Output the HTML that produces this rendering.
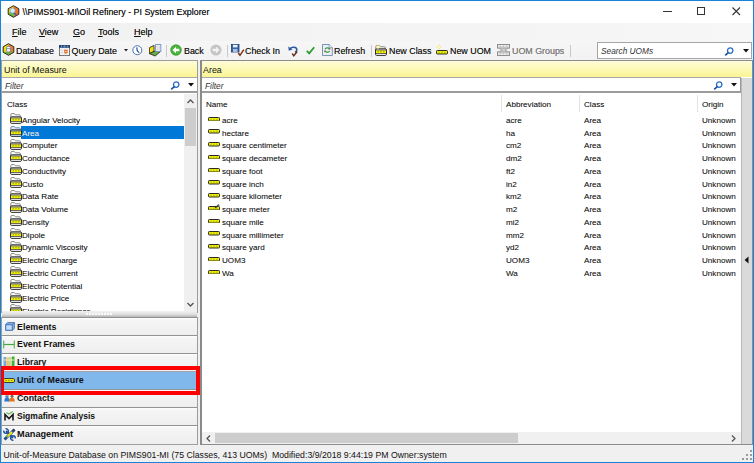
<!DOCTYPE html><html><head><meta charset="utf-8"><style>
*{margin:0;padding:0;box-sizing:border-box}
html,body{width:754px;height:463px;overflow:hidden;background:#fff}
body{font-family:"Liberation Sans",sans-serif;color:#000;position:relative}
div,svg{position:absolute}
.t{white-space:nowrap;line-height:1}
.mi{font-size:9px;color:#111;text-shadow:0 0 0.3px rgba(0,0,0,.6)}
.tb{font-size:8.9px;color:#1a1a1a;text-shadow:0 0 0.3px rgba(0,0,0,.6)}
.it{font-size:8.1px;color:#1e1e1e;text-shadow:0 0 0.2px rgba(0,0,0,.35)}
.nb{font-size:8.8px;font-weight:bold;color:#111}
.nav{left:2px;width:195px;height:18px;background:linear-gradient(#fdfdfd,#f5f5f5 15%,#eeeeee);border-top:1px solid #939393}
</style></head><body>
<div style="left:0;top:0;width:754px;height:463px;background:#f0f0f0"></div>
<div style="left:0;top:0;width:754px;height:23px;background:#fff"></div>
<div style="left:0;top:23px;width:754px;height:18px;background:linear-gradient(90deg,#f1f1f1,#f4f4f4 60%,#f7f7f7)"></div>
<div style="left:0;top:41px;width:754px;height:19px;background:linear-gradient(#f6f6f6,#f2f2f2)"></div>
<svg style="left:6.5px;top:4.5px" width="13" height="13" viewBox="0 0 13 13">
<polygon points="6.5,0.7 11.8,3.7 11.8,9.3 6.5,12.3 1.2,9.3 1.2,3.7" fill="#ee7422"/>
<polygon points="6.5,0.7 1.2,3.7 1.2,9.3 4,10.8 6.5,6.5" fill="#f2dc10"/>
<polygon points="1.2,8 4,10.8 6.5,12.3 7.5,9 4,7" fill="#5cbf40"/>
<polygon points="6.5,0.7 11.8,3.7 11.8,9.3 6.5,12.3 1.2,9.3 1.2,3.7" fill="none" stroke="#2a2a2a" stroke-width="1"/>
<path d="M6.8 7.3L9.3 10.6" stroke="#5a5a9a" stroke-width="1.6"/>
<circle cx="5.6" cy="5.6" r="2.6" fill="#d4ecfa" stroke="#6a8ab0" stroke-width="0.6"/>
</svg>
<div class="t " style="left:22.6px;top:7.6px;font-size:8.9px;color:#111;text-shadow:0 0 0.3px rgba(0,0,0,.6)">\\PIMS901-MI\Oil Refinery - PI System Explorer</div>
<div style="left:663px;top:11px;width:9px;height:1px;background:#333"></div>
<div style="left:697px;top:7px;width:8px;height:8px;border:1px solid #333"></div>
<svg style="left:732px;top:7px" width="9" height="9"><path d="M0.5 0.5L8 8M8 0.5L0.5 8" stroke="#333" stroke-width="1.1"/></svg>
<div class="t mi" style="left:12px;top:28px;"><u>F</u>ile</div>
<div class="t mi" style="left:39px;top:28px;"><u>V</u>iew</div>
<div class="t mi" style="left:73px;top:28px;"><u>G</u>o</div>
<div class="t mi" style="left:98px;top:28px;"><u>T</u>ools</div>
<div class="t mi" style="left:134px;top:28px;"><u>H</u>elp</div>
<div class="t tb" style="left:16px;top:46.5px;">Database</div>
<div class="t tb" style="left:71.5px;top:46.5px;">Query Date</div>
<div class="t tb" style="left:184px;top:46.5px;">Back</div>
<div class="t tb" style="left:245px;top:46.5px;">Check In</div>
<div class="t tb" style="left:334px;top:46.5px;">Refresh</div>
<div class="t tb" style="left:389px;top:46.5px;">New Class</div>
<div class="t tb" style="left:450px;top:46.5px;">New UOM</div>
<div class="t tb" style="left:512px;top:46.5px;color:#8c8c8c">UOM Groups</div>
<div style="left:166px;top:45px;width:1px;height:12px;background:#c8c8c8"></div>
<div style="left:227px;top:45px;width:1px;height:12px;background:#c8c8c8"></div>
<div style="left:371px;top:45px;width:1px;height:12px;background:#c8c8c8"></div>
<div style="left:570px;top:45px;width:1px;height:12px;background:#c8c8c8"></div>
<svg style="left:2px;top:43px" width="13" height="13" viewBox="0 0 13 13">
<polygon points="6.5,0.7 11.8,3.7 11.8,9.3 6.5,12.3 1.2,9.3 1.2,3.7" fill="#ee7a1e"/>
<polygon points="6.5,0.7 1.2,3.7 1.2,9.3 6.5,9.3" fill="#f2dc10"/>
<polygon points="1.2,8.6 6.5,12.3 11.8,8.6 11.8,9.3 6.5,12.3 1.2,9.3" fill="#5cbf40"/>
<polygon points="1.6,8.4 6.5,11.8 11.4,8.4 6.5,9.5" fill="#5cbf40"/>
<polygon points="6.5,0.7 11.8,3.7 11.8,9.3 6.5,12.3 1.2,9.3 1.2,3.7" fill="none" stroke="#2a2a2a" stroke-width="1"/>
<rect x="4.6" y="3.4" width="3.8" height="5.6" rx="1.2" fill="#f8f8f8" stroke="#5a78a8" stroke-width="0.8"/>
<path d="M4.8 5.6H8.2" stroke="#5a78a8" stroke-width="0.7"/>
</svg>
<svg style="left:59px;top:45px" width="11" height="11" viewBox="0 0 11 11">
<rect x="0.5" y="0.5" width="10" height="10" fill="#fafafa" stroke="#707070" stroke-width="1"/>
<rect x="0" y="0" width="11" height="2.8" fill="#23457e"/>
<path d="M2 1.2H3M4.5 1.2H6.5M8 1.2H9" stroke="#c8d4e8" stroke-width="0.8"/>
<path d="M0.5 5.2H10.5M0.5 7.8H10.5M3 2.8V10.5M5.5 2.8V10.5M8 2.8V10.5" stroke="#d0d0d0" stroke-width="0.6"/>
<path d="M5.3 4.8H8.5V7.3L6.9 9L5.3 7.3Z" fill="#ee6a1a"/>
<circle cx="6.9" cy="6.6" r="0.7" fill="#fff"/>
</svg>
<svg style="left:123.5px;top:49px" width="4" height="3"><path d="M0 0H4L2 2.5Z" fill="#222"/></svg>
<svg style="left:132px;top:45px" width="11" height="11" viewBox="0 0 11 11">
<circle cx="5.3" cy="5.2" r="4.5" fill="#fff" stroke="#4a74b4" stroke-width="1"/>
<path d="M5 2.3C4.6 4.5 5.2 6.3 7.2 7.6" stroke="#1f3f73" stroke-width="1.1" fill="none"/>
</svg>
<svg style="left:149px;top:44px" width="13" height="13" viewBox="0 0 13 13">
<polygon points="0.4,3.7 5,1.4 5,7.4 0.4,9.6" fill="#f0e010" stroke="#3a2a20" stroke-width="0.9"/>
<polygon points="0.4,9.6 5,7.4 11.6,7.4 6.1,12" fill="#5fb048" stroke="#3a2a20" stroke-width="0.9"/>
<rect x="6.6" y="0.5" width="5.2" height="7" fill="#f4f4f4" stroke="#6a90c8" stroke-width="0.9"/>
<path d="M8.2 1.5V6.5M10.2 1.5V6.5" stroke="#c8c8c8" stroke-width="0.8"/>
</svg>
<svg style="left:169.5px;top:44px" width="12" height="12" viewBox="0 0 12 12">
<circle cx="6" cy="6" r="5.6" fill="#4cb43c"/>
<circle cx="6" cy="6" r="5.2" fill="none" stroke="#3a9a30" stroke-width="0.6"/>
<path d="M2.5 6L6 2.7V4.7H9.3V7.3H6V9.3Z" fill="#fff"/>
</svg>
<svg style="left:209.5px;top:44px" width="12" height="12" viewBox="0 0 12 12">
<circle cx="6" cy="6" r="5.6" fill="#c6c6c6"/>
<path d="M9.5 6L6 2.7V4.7H2.7V7.3H6V9.3Z" fill="#f4f4f4"/>
</svg>
<svg style="left:230.5px;top:44px" width="14" height="13" viewBox="0 0 14 13">
<rect x="0.5" y="0.5" width="7.5" height="7.5" fill="#3a66aa" stroke="#203c70" stroke-width="0.8"/>
<rect x="2" y="0.8" width="4.5" height="2.6" fill="#e8eef6"/>
<rect x="2" y="5" width="4.5" height="3" fill="#a8bedc"/>
<path d="M7.3 9L9 11.3L12.8 5.6" stroke="#7a2f1b" stroke-width="1.5" fill="none"/>
</svg>
<svg style="left:288px;top:45px" width="11" height="12" viewBox="0 0 11 12">
<path d="M2 3.8C3.5 1.8 8.8 1.5 8.8 4.8C8.8 6 8 6.8 7 7.2" stroke="#2a5aa6" stroke-width="1.6" fill="none"/>
<path d="M0.2 1.6L0.8 5.8L4.6 4.6Z" fill="#2a5aa6"/>
<path d="M4.2 8.5L5.8 10.8L9.2 6.5" stroke="#6a2f1b" stroke-width="1.4" fill="none"/>
</svg>
<svg style="left:305.5px;top:46px" width="9" height="9" viewBox="0 0 9 9"><path d="M0.8 4.8L3.2 7.4L8.2 1.2" stroke="#2a9a2a" stroke-width="1.7" fill="none"/></svg>
<svg style="left:321.5px;top:44px" width="11" height="12" viewBox="0 0 11 12">
<path d="M0.5 0.5H7.2L10.3 3.6V11.5H0.5Z" fill="#e8f0fa" stroke="#7088a8" stroke-width="0.9"/>
<path d="M7.2 0.5V3.6H10.3" fill="#fff" stroke="#7088a8" stroke-width="0.7"/>
<path d="M3 5.2C3.8 3.6 6.6 3.6 7.4 5" stroke="#3aa035" stroke-width="1.3" fill="none"/>
<path d="M7.6 7C6.8 8.6 4 8.6 3.2 7.2" stroke="#3aa035" stroke-width="1.3" fill="none"/>
<path d="M6.3 5.6H8.3V3.6Z" fill="#8a4a2a"/><path d="M4.3 6.6H2.3V8.6Z" fill="#8a4a2a"/>
</svg>
<svg style="left:375px;top:45px" width="12" height="11" viewBox="0 0 12 11">
<path d="M0.8 5V1.6Q0.8 0.6 1.8 0.6H4.4L5.4 1.8H9.4Q10.3 1.8 10.3 2.7V5" fill="#ffffff" stroke="#6a6a6a" stroke-width="0.8"/>
<rect x="0.5" y="3.8" width="11" height="6.6" rx="1.2" fill="#f6f6f6" stroke="#303030" stroke-width="1"/>
<rect x="1" y="5.3" width="10" height="2.9" fill="#f2f200"/>
<path d="M1 5H11M1 8.5H11" stroke="#2a2a2a" stroke-width="0.7"/>
<path d="M2.6 6.75H3.8M5.4 6.75H6.6M8.2 6.75H9.4" stroke="#7a7a20" stroke-width="0.9"/>
</svg>
<svg style="left:375px;top:43.5px" width="6" height="6"><path d="M3 0L3.8 2.2L6 3L3.8 3.8L3 6L2.2 3.8L0 3L2.2 2.2Z" fill="#f0dc60"/><circle cx="3" cy="3" r="1.3" fill="#fff6c0"/></svg>
<svg style="left:436px;top:50px" width="12" height="4.5" viewBox="0 0 12 4.5">
<rect x="0.5" y="0.5" width="11" height="3.5" rx="0.8" fill="#f0f000" stroke="#2a2a2a" stroke-width="1"/>
<path d="M2.3 2.25H3.6M5.2 2.25H6.6M8.2 2.25H9.6" stroke="#9a9a20" stroke-width="0.8"/>
</svg>
<svg style="left:435.5px;top:44px" width="6" height="6"><path d="M3 0L3.8 2.2L6 3L3.8 3.8L3 6L2.2 3.8L0 3L2.2 2.2Z" fill="#f0dc60"/><circle cx="3" cy="3" r="1.3" fill="#fff6c0"/></svg>
<svg style="left:497px;top:44px" width="13" height="12" viewBox="0 0 13 12">
<rect x="0.5" y="0.5" width="12" height="3.6" fill="#e8e8e8" stroke="#909090"/>
<rect x="0.5" y="7.9" width="12" height="3.6" fill="#e8e8e8" stroke="#909090"/>
<path d="M2.5 2.3H4M5.8 2.3H7.2M9 2.3H10.5M2.5 9.7H4M5.8 9.7H7.2M9 9.7H10.5" stroke="#a8a8a8" stroke-width="0.8"/>
<path d="M2 4.1L5 6L2 7.9M11 4.1L8 6L11 7.9M5 6H8" stroke="#9a9a9a" stroke-width="0.9" fill="none"/>
</svg>
<div style="left:597px;top:42px;width:155px;height:17px;background:#fff;border:1px solid #a5a5a5"></div>
<div class="t " style="left:601px;top:47px;font-size:8.3px;font-style:italic;color:#333">Search UOMs</div>
<svg style="left:724px;top:46.5px" width="10" height="9" viewBox="0 0 10 9">
<circle cx="6.2" cy="3.6" r="2.7" fill="none" stroke="#2b6cc4" stroke-width="1.3"/>
<path d="M4.3 5.6L1.2 8.4" stroke="#1d4e96" stroke-width="1.6"/>
</svg>
<svg style="left:742.5px;top:49px" width="6" height="4"><path d="M0 0H6L3 3.5Z" fill="#111"/></svg>
<div style="left:1px;top:60px;width:197px;height:253px;background:#fff;border:1px solid #9c9c9c"></div>
<div style="left:2px;top:61px;width:195px;height:16px;background:linear-gradient(#fefdd8,#fbf594)"></div>
<div class="t " style="left:4px;top:66px;font-size:8.9px;color:#111">Unit of Measure</div>
<div style="left:2px;top:77px;width:195px;height:16px;background:#fff;border-top:1px solid #a8a8a8;border-bottom:2px solid #9c9c9c"></div>
<div class="t " style="left:5px;top:82px;font-size:8.3px;font-style:italic;color:#333">Filter</div>
<svg style="left:170px;top:80.5px" width="10" height="9" viewBox="0 0 10 9">
<circle cx="6.2" cy="3.6" r="2.7" fill="none" stroke="#2b6cc4" stroke-width="1.3"/>
<path d="M4.3 5.6L1.2 8.4" stroke="#1d4e96" stroke-width="1.6"/>
</svg>
<svg style="left:187.5px;top:83px" width="6" height="4"><path d="M0 0H6L3 3.5Z" fill="#111"/></svg>
<div class="t it" style="left:7px;top:101px;color:#222">Class</div>
<div style="left:2px;top:93px;width:182px;height:218px;overflow:hidden">
<svg style="left:8px;top:20.0px" width="12" height="11" viewBox="0 0 12 11">
<path d="M0.8 5V1.6Q0.8 0.6 1.8 0.6H4.4L5.4 1.8H9.4Q10.3 1.8 10.3 2.7V5" fill="#ffffff" stroke="#6a6a6a" stroke-width="0.8"/>
<rect x="0.5" y="3.8" width="11" height="6.6" rx="1.2" fill="#f6f6f6" stroke="#303030" stroke-width="1"/>
<rect x="1" y="5.3" width="10" height="2.9" fill="#f2f200"/>
<path d="M1 5H11M1 8.5H11" stroke="#2a2a2a" stroke-width="0.7"/>
<path d="M2.6 6.75H3.8M5.4 6.75H6.6M8.2 6.75H9.4" stroke="#7a7a20" stroke-width="0.9"/>
</svg>
<div class="t it" style="left:20px;top:23.80px;color:#1a1a1a">Angular Velocity</div>
<div style="left:19px;top:33.25px;width:163px;height:12.5px;background:#0078d7"></div>
<svg style="left:8px;top:32.75px" width="12" height="11" viewBox="0 0 12 11">
<path d="M0.8 5V1.6Q0.8 0.6 1.8 0.6H4.4L5.4 1.8H9.4Q10.3 1.8 10.3 2.7V5" fill="#dfeaf7" stroke="#5a7090" stroke-width="0.8"/>
<rect x="0.5" y="3.8" width="11" height="6.6" rx="1.2" fill="#c8dcf0" stroke="#303030" stroke-width="1"/>
<rect x="1" y="5.3" width="10" height="2.9" fill="#f2f200"/>
<path d="M1 5H11M1 8.5H11" stroke="#2a2a2a" stroke-width="0.7"/>
<path d="M2.6 6.75H3.8M5.4 6.75H6.6M8.2 6.75H9.4" stroke="#7a7a20" stroke-width="0.9"/>
</svg>
<div class="t it" style="left:20px;top:36.55px;color:#fff">Area</div>
<svg style="left:8px;top:45.5px" width="12" height="11" viewBox="0 0 12 11">
<path d="M0.8 5V1.6Q0.8 0.6 1.8 0.6H4.4L5.4 1.8H9.4Q10.3 1.8 10.3 2.7V5" fill="#ffffff" stroke="#6a6a6a" stroke-width="0.8"/>
<rect x="0.5" y="3.8" width="11" height="6.6" rx="1.2" fill="#f6f6f6" stroke="#303030" stroke-width="1"/>
<rect x="1" y="5.3" width="10" height="2.9" fill="#f2f200"/>
<path d="M1 5H11M1 8.5H11" stroke="#2a2a2a" stroke-width="0.7"/>
<path d="M2.6 6.75H3.8M5.4 6.75H6.6M8.2 6.75H9.4" stroke="#7a7a20" stroke-width="0.9"/>
</svg>
<div class="t it" style="left:20px;top:49.30px;color:#1a1a1a">Computer</div>
<svg style="left:8px;top:58.25px" width="12" height="11" viewBox="0 0 12 11">
<path d="M0.8 5V1.6Q0.8 0.6 1.8 0.6H4.4L5.4 1.8H9.4Q10.3 1.8 10.3 2.7V5" fill="#ffffff" stroke="#6a6a6a" stroke-width="0.8"/>
<rect x="0.5" y="3.8" width="11" height="6.6" rx="1.2" fill="#f6f6f6" stroke="#303030" stroke-width="1"/>
<rect x="1" y="5.3" width="10" height="2.9" fill="#f2f200"/>
<path d="M1 5H11M1 8.5H11" stroke="#2a2a2a" stroke-width="0.7"/>
<path d="M2.6 6.75H3.8M5.4 6.75H6.6M8.2 6.75H9.4" stroke="#7a7a20" stroke-width="0.9"/>
</svg>
<div class="t it" style="left:20px;top:62.05px;color:#1a1a1a">Conductance</div>
<svg style="left:8px;top:71.0px" width="12" height="11" viewBox="0 0 12 11">
<path d="M0.8 5V1.6Q0.8 0.6 1.8 0.6H4.4L5.4 1.8H9.4Q10.3 1.8 10.3 2.7V5" fill="#ffffff" stroke="#6a6a6a" stroke-width="0.8"/>
<rect x="0.5" y="3.8" width="11" height="6.6" rx="1.2" fill="#f6f6f6" stroke="#303030" stroke-width="1"/>
<rect x="1" y="5.3" width="10" height="2.9" fill="#f2f200"/>
<path d="M1 5H11M1 8.5H11" stroke="#2a2a2a" stroke-width="0.7"/>
<path d="M2.6 6.75H3.8M5.4 6.75H6.6M8.2 6.75H9.4" stroke="#7a7a20" stroke-width="0.9"/>
</svg>
<div class="t it" style="left:20px;top:74.80px;color:#1a1a1a">Conductivity</div>
<svg style="left:8px;top:83.75px" width="12" height="11" viewBox="0 0 12 11">
<path d="M0.8 5V1.6Q0.8 0.6 1.8 0.6H4.4L5.4 1.8H9.4Q10.3 1.8 10.3 2.7V5" fill="#ffffff" stroke="#6a6a6a" stroke-width="0.8"/>
<rect x="0.5" y="3.8" width="11" height="6.6" rx="1.2" fill="#f6f6f6" stroke="#303030" stroke-width="1"/>
<rect x="1" y="5.3" width="10" height="2.9" fill="#f2f200"/>
<path d="M1 5H11M1 8.5H11" stroke="#2a2a2a" stroke-width="0.7"/>
<path d="M2.6 6.75H3.8M5.4 6.75H6.6M8.2 6.75H9.4" stroke="#7a7a20" stroke-width="0.9"/>
</svg>
<div class="t it" style="left:20px;top:87.55px;color:#1a1a1a">Custo</div>
<svg style="left:8px;top:96.5px" width="12" height="11" viewBox="0 0 12 11">
<path d="M0.8 5V1.6Q0.8 0.6 1.8 0.6H4.4L5.4 1.8H9.4Q10.3 1.8 10.3 2.7V5" fill="#ffffff" stroke="#6a6a6a" stroke-width="0.8"/>
<rect x="0.5" y="3.8" width="11" height="6.6" rx="1.2" fill="#f6f6f6" stroke="#303030" stroke-width="1"/>
<rect x="1" y="5.3" width="10" height="2.9" fill="#f2f200"/>
<path d="M1 5H11M1 8.5H11" stroke="#2a2a2a" stroke-width="0.7"/>
<path d="M2.6 6.75H3.8M5.4 6.75H6.6M8.2 6.75H9.4" stroke="#7a7a20" stroke-width="0.9"/>
</svg>
<div class="t it" style="left:20px;top:100.30px;color:#1a1a1a">Data Rate</div>
<svg style="left:8px;top:109.25px" width="12" height="11" viewBox="0 0 12 11">
<path d="M0.8 5V1.6Q0.8 0.6 1.8 0.6H4.4L5.4 1.8H9.4Q10.3 1.8 10.3 2.7V5" fill="#ffffff" stroke="#6a6a6a" stroke-width="0.8"/>
<rect x="0.5" y="3.8" width="11" height="6.6" rx="1.2" fill="#f6f6f6" stroke="#303030" stroke-width="1"/>
<rect x="1" y="5.3" width="10" height="2.9" fill="#f2f200"/>
<path d="M1 5H11M1 8.5H11" stroke="#2a2a2a" stroke-width="0.7"/>
<path d="M2.6 6.75H3.8M5.4 6.75H6.6M8.2 6.75H9.4" stroke="#7a7a20" stroke-width="0.9"/>
</svg>
<div class="t it" style="left:20px;top:113.05px;color:#1a1a1a">Data Volume</div>
<svg style="left:8px;top:122.0px" width="12" height="11" viewBox="0 0 12 11">
<path d="M0.8 5V1.6Q0.8 0.6 1.8 0.6H4.4L5.4 1.8H9.4Q10.3 1.8 10.3 2.7V5" fill="#ffffff" stroke="#6a6a6a" stroke-width="0.8"/>
<rect x="0.5" y="3.8" width="11" height="6.6" rx="1.2" fill="#f6f6f6" stroke="#303030" stroke-width="1"/>
<rect x="1" y="5.3" width="10" height="2.9" fill="#f2f200"/>
<path d="M1 5H11M1 8.5H11" stroke="#2a2a2a" stroke-width="0.7"/>
<path d="M2.6 6.75H3.8M5.4 6.75H6.6M8.2 6.75H9.4" stroke="#7a7a20" stroke-width="0.9"/>
</svg>
<div class="t it" style="left:20px;top:125.80px;color:#1a1a1a">Density</div>
<svg style="left:8px;top:134.75px" width="12" height="11" viewBox="0 0 12 11">
<path d="M0.8 5V1.6Q0.8 0.6 1.8 0.6H4.4L5.4 1.8H9.4Q10.3 1.8 10.3 2.7V5" fill="#ffffff" stroke="#6a6a6a" stroke-width="0.8"/>
<rect x="0.5" y="3.8" width="11" height="6.6" rx="1.2" fill="#f6f6f6" stroke="#303030" stroke-width="1"/>
<rect x="1" y="5.3" width="10" height="2.9" fill="#f2f200"/>
<path d="M1 5H11M1 8.5H11" stroke="#2a2a2a" stroke-width="0.7"/>
<path d="M2.6 6.75H3.8M5.4 6.75H6.6M8.2 6.75H9.4" stroke="#7a7a20" stroke-width="0.9"/>
</svg>
<div class="t it" style="left:20px;top:138.55px;color:#1a1a1a">Dipole</div>
<svg style="left:8px;top:147.5px" width="12" height="11" viewBox="0 0 12 11">
<path d="M0.8 5V1.6Q0.8 0.6 1.8 0.6H4.4L5.4 1.8H9.4Q10.3 1.8 10.3 2.7V5" fill="#ffffff" stroke="#6a6a6a" stroke-width="0.8"/>
<rect x="0.5" y="3.8" width="11" height="6.6" rx="1.2" fill="#f6f6f6" stroke="#303030" stroke-width="1"/>
<rect x="1" y="5.3" width="10" height="2.9" fill="#f2f200"/>
<path d="M1 5H11M1 8.5H11" stroke="#2a2a2a" stroke-width="0.7"/>
<path d="M2.6 6.75H3.8M5.4 6.75H6.6M8.2 6.75H9.4" stroke="#7a7a20" stroke-width="0.9"/>
</svg>
<div class="t it" style="left:20px;top:151.30px;color:#1a1a1a">Dynamic Viscosity</div>
<svg style="left:8px;top:160.25px" width="12" height="11" viewBox="0 0 12 11">
<path d="M0.8 5V1.6Q0.8 0.6 1.8 0.6H4.4L5.4 1.8H9.4Q10.3 1.8 10.3 2.7V5" fill="#ffffff" stroke="#6a6a6a" stroke-width="0.8"/>
<rect x="0.5" y="3.8" width="11" height="6.6" rx="1.2" fill="#f6f6f6" stroke="#303030" stroke-width="1"/>
<rect x="1" y="5.3" width="10" height="2.9" fill="#f2f200"/>
<path d="M1 5H11M1 8.5H11" stroke="#2a2a2a" stroke-width="0.7"/>
<path d="M2.6 6.75H3.8M5.4 6.75H6.6M8.2 6.75H9.4" stroke="#7a7a20" stroke-width="0.9"/>
</svg>
<div class="t it" style="left:20px;top:164.05px;color:#1a1a1a">Electric Charge</div>
<svg style="left:8px;top:173.0px" width="12" height="11" viewBox="0 0 12 11">
<path d="M0.8 5V1.6Q0.8 0.6 1.8 0.6H4.4L5.4 1.8H9.4Q10.3 1.8 10.3 2.7V5" fill="#ffffff" stroke="#6a6a6a" stroke-width="0.8"/>
<rect x="0.5" y="3.8" width="11" height="6.6" rx="1.2" fill="#f6f6f6" stroke="#303030" stroke-width="1"/>
<rect x="1" y="5.3" width="10" height="2.9" fill="#f2f200"/>
<path d="M1 5H11M1 8.5H11" stroke="#2a2a2a" stroke-width="0.7"/>
<path d="M2.6 6.75H3.8M5.4 6.75H6.6M8.2 6.75H9.4" stroke="#7a7a20" stroke-width="0.9"/>
</svg>
<div class="t it" style="left:20px;top:176.80px;color:#1a1a1a">Electric Current</div>
<svg style="left:8px;top:185.75px" width="12" height="11" viewBox="0 0 12 11">
<path d="M0.8 5V1.6Q0.8 0.6 1.8 0.6H4.4L5.4 1.8H9.4Q10.3 1.8 10.3 2.7V5" fill="#ffffff" stroke="#6a6a6a" stroke-width="0.8"/>
<rect x="0.5" y="3.8" width="11" height="6.6" rx="1.2" fill="#f6f6f6" stroke="#303030" stroke-width="1"/>
<rect x="1" y="5.3" width="10" height="2.9" fill="#f2f200"/>
<path d="M1 5H11M1 8.5H11" stroke="#2a2a2a" stroke-width="0.7"/>
<path d="M2.6 6.75H3.8M5.4 6.75H6.6M8.2 6.75H9.4" stroke="#7a7a20" stroke-width="0.9"/>
</svg>
<div class="t it" style="left:20px;top:189.55px;color:#1a1a1a">Electric Potential</div>
<svg style="left:8px;top:198.5px" width="12" height="11" viewBox="0 0 12 11">
<path d="M0.8 5V1.6Q0.8 0.6 1.8 0.6H4.4L5.4 1.8H9.4Q10.3 1.8 10.3 2.7V5" fill="#ffffff" stroke="#6a6a6a" stroke-width="0.8"/>
<rect x="0.5" y="3.8" width="11" height="6.6" rx="1.2" fill="#f6f6f6" stroke="#303030" stroke-width="1"/>
<rect x="1" y="5.3" width="10" height="2.9" fill="#f2f200"/>
<path d="M1 5H11M1 8.5H11" stroke="#2a2a2a" stroke-width="0.7"/>
<path d="M2.6 6.75H3.8M5.4 6.75H6.6M8.2 6.75H9.4" stroke="#7a7a20" stroke-width="0.9"/>
</svg>
<div class="t it" style="left:20px;top:202.30px;color:#1a1a1a">Electric Price</div>
<svg style="left:8px;top:211.25px" width="12" height="11" viewBox="0 0 12 11">
<path d="M0.8 5V1.6Q0.8 0.6 1.8 0.6H4.4L5.4 1.8H9.4Q10.3 1.8 10.3 2.7V5" fill="#ffffff" stroke="#6a6a6a" stroke-width="0.8"/>
<rect x="0.5" y="3.8" width="11" height="6.6" rx="1.2" fill="#f6f6f6" stroke="#303030" stroke-width="1"/>
<rect x="1" y="5.3" width="10" height="2.9" fill="#f2f200"/>
<path d="M1 5H11M1 8.5H11" stroke="#2a2a2a" stroke-width="0.7"/>
<path d="M2.6 6.75H3.8M5.4 6.75H6.6M8.2 6.75H9.4" stroke="#7a7a20" stroke-width="0.9"/>
</svg>
<div class="t it" style="left:20px;top:215.05px;color:#1a1a1a">Electric Resistance</div>
</div>
<div style="left:184px;top:94px;width:13px;height:217px;background:#f0f0f0"></div>
<div style="left:185px;top:108px;width:11px;height:38px;background:#cdcdcd"></div>
<svg style="left:187px;top:99px" width="7" height="5"><path d="M0.5 4L3.5 1L6.5 4" stroke="#555" stroke-width="1.3" fill="none"/></svg>
<svg style="left:187px;top:302px" width="7" height="5"><path d="M0.5 1L3.5 4L6.5 1" stroke="#555" stroke-width="1.3" fill="none"/></svg>
<div style="left:2px;top:311px;width:195px;height:6.5px;background:linear-gradient(#f2f2f2,#e0e0e0 45%,#c4c4c4 75%,#8e8e8e)"></div>
<div style="left:86px;top:312.5px;width:2px;height:2px;background:#fbfbfb"></div>
<div style="left:89px;top:312.5px;width:2px;height:2px;background:#fbfbfb"></div>
<div style="left:92px;top:312.5px;width:2px;height:2px;background:#fbfbfb"></div>
<div style="left:95px;top:312.5px;width:2px;height:2px;background:#fbfbfb"></div>
<div style="left:98px;top:312.5px;width:2px;height:2px;background:#fbfbfb"></div>
<div style="left:101px;top:312.5px;width:2px;height:2px;background:#fbfbfb"></div>
<div style="left:104px;top:312.5px;width:2px;height:2px;background:#fbfbfb"></div>
<div style="left:107px;top:312.5px;width:2px;height:2px;background:#fbfbfb"></div>
<div style="left:110px;top:312.5px;width:2px;height:2px;background:#fbfbfb"></div>
<div style="left:1px;top:317px;width:197px;height:128px;background:#f3f3f3;border-left:1px solid #9c9c9c;border-right:1px solid #9c9c9c"></div>
<div class="nav" style="top:317.30px;height:17.95px"></div>
<div class="t nb" style="left:17px;top:322.5px;font-size:8.9px">Elements</div>
<div class="nav" style="top:335.25px;height:17.95px"></div>
<div class="t nb" style="left:17px;top:340.45px;font-size:8.85px">Event Frames</div>
<div class="nav" style="top:353.20px;height:17.95px"></div>
<div class="t nb" style="left:17px;top:358.4px;font-size:8.7px">Library</div>
<div style="left:2px;top:371.15px;width:195px;height:17.95px;background:#80b8ec;border-top:1px solid #a5a5a5"></div>
<div class="t nb" style="left:17px;top:376.34999999999997px;font-size:8.9px">Unit of Measure</div>
<div class="nav" style="top:389.10px;height:17.95px"></div>
<div class="t nb" style="left:17px;top:394.3px;font-size:8.8px">Contacts</div>
<div class="nav" style="top:407.05px;height:17.95px"></div>
<div class="t nb" style="left:17px;top:412.25px;font-size:8.55px">Sigmafine Analysis</div>
<div class="nav" style="top:425.00px;height:20.00px"></div>
<div class="t nb" style="left:17px;top:430.2px;font-size:9.2px">Management</div>
<div style="left:2px;top:444px;width:195px;height:1px;background:#a0a0a0"></div>
<svg style="left:5px;top:322px" width="10" height="9" viewBox="0 0 10 9">
<polygon points="0.6,2.6 2.6,0.6 9.4,0.6 9.4,6.4 7.4,8.4 0.6,8.4" fill="#8fb8e6" stroke="#3f6fb3" stroke-width="0.9"/>
<path d="M0.6 2.6H7.4V8.4M7.4 2.6L9.4 0.6" stroke="#3f6fb3" stroke-width="0.8" fill="none"/>
<rect x="1.6" y="3.6" width="4.8" height="3.8" fill="#c6def6"/>
</svg>
<svg style="left:3px;top:340px" width="12" height="9" viewBox="0 0 12 9">
<path d="M0.7 0.5V8.5M11.3 0.5V8.5" stroke="#5fb65a" stroke-width="1.2"/>
<path d="M0.7 4.5H11.3" stroke="#4aa545" stroke-width="1.2"/>
</svg>
<svg style="left:3px;top:356px" width="12" height="10" viewBox="0 0 12 10">
<rect x="0.5" y="1" width="2.5" height="9" fill="#7aa8dc"/>
<rect x="3" y="1.5" width="3" height="8.5" fill="#e6c77a"/>
<rect x="6" y="1" width="3" height="9" fill="#c8d6a0"/>
<rect x="9" y="0.5" width="2.5" height="9.5" fill="#3fae3a"/>
<path d="M1 4H11" stroke="#f5f0c0" stroke-width="1"/>
</svg>
<svg style="left:3px;top:378px" width="12" height="5" viewBox="0 0 12 5">
<rect x="0.5" y="0.5" width="11" height="4" rx="1.3" fill="#e8ea10" stroke="#3a3a3a" stroke-width="1"/>
<path d="M2.5 2.5H3.8M5.3 2.5H6.6M8.1 2.5H9.4" stroke="#77771e" stroke-width="0.9"/>
</svg>
<svg style="left:4px;top:394px" width="11" height="8" viewBox="0 0 11 8">
<path d="M0.3 7.5C0.3 4.5 1.5 3.2 3 3.2C4.6 3.2 5.8 4.5 5.8 7.5Z" fill="#2f78d0"/>
<circle cx="3" cy="2.2" r="1.6" fill="#3a80d6"/>
<rect x="1.8" y="0.3" width="2.4" height="1.3" fill="#f0d020"/>
<path d="M5.2 7.5C5.2 4.5 6.4 3.4 8 3.4C9.6 3.4 10.8 4.5 10.8 7.5Z" fill="#e8741e"/>
<circle cx="8" cy="2.3" r="1.5" fill="#7a6a50"/>
</svg>
<svg style="left:4px;top:411px" width="10" height="10" viewBox="0 0 10 10">
<path d="M1 9.5V3.5L5 7.5L9 3.5V9.5" stroke="#1a1a1a" stroke-width="1.6" fill="none" stroke-linejoin="miter"/>
<path d="M2.5 1.5L4.8 3L8.8 0.5" stroke="#5fc050" stroke-width="1.1" fill="none"/>
</svg>
<svg style="left:3px;top:428px" width="13" height="13" viewBox="0 0 13 13">
<path d="M3 3L10 10" stroke="#24519e" stroke-width="1.8"/>
<path d="M0.8 2.6A2.3 2.3 0 1 0 2.6 0.8" stroke="#24519e" stroke-width="1.5" fill="none"/>
<path d="M12.2 10.4A2.3 2.3 0 1 0 10.4 12.2" stroke="#24519e" stroke-width="1.5" fill="none"/>
<path d="M11.5 1.5L1.5 11.5" stroke="#2a4f94" stroke-width="3"/>
<path d="M9 4L4 9" stroke="#f2ea10" stroke-width="2"/>
<path d="M5 8L4 9" stroke="#5bbf3a" stroke-width="2"/>
<path d="M11.5 1.5L10 3" stroke="#3a3a3a" stroke-width="2"/>
</svg>
<div style="left:0;top:366px;width:200px;height:29px;border:4px solid #ff0000"></div>
<div style="left:200px;top:60px;width:553px;height:385px;background:#fff;border:1px solid #8c8c8c;border-left:2px solid #8a8a8a"></div>
<div style="left:202px;top:61px;width:550px;height:16px;background:linear-gradient(#fefdd8,#fbf594)"></div>
<div class="t " style="left:203px;top:66px;font-size:8.9px;color:#111">Area</div>
<div style="left:202px;top:77px;width:539px;height:16px;background:#fff;border-top:1px solid #a8a8a8;border-bottom:2px solid #9c9c9c;border-right:1px solid #9a9a9a"></div>
<div class="t " style="left:205px;top:82px;font-size:8.3px;font-style:italic;color:#333">Filter</div>
<svg style="left:713px;top:80.5px" width="10" height="9" viewBox="0 0 10 9">
<circle cx="6.2" cy="3.6" r="2.7" fill="none" stroke="#2b6cc4" stroke-width="1.3"/>
<path d="M4.3 5.6L1.2 8.4" stroke="#1d4e96" stroke-width="1.6"/>
</svg>
<svg style="left:731px;top:83px" width="6" height="4"><path d="M0 0H6L3 3.5Z" fill="#111"/></svg>
<div style="left:741px;top:78px;width:11px;height:366px;background:#dadada;border-left:1px solid #b8b8b8"></div>
<svg style="left:744px;top:256px" width="5" height="8"><path d="M4.5 0.5V7.5L0.6 4Z" fill="#111"/></svg>
<div class="t it" style="left:206px;top:101px;color:#222">Name</div>
<div class="t it" style="left:506px;top:101px;color:#222">Abbreviation</div>
<div class="t it" style="left:584px;top:101px;color:#222">Class</div>
<div class="t it" style="left:702px;top:101px;color:#222">Origin</div>
<div style="left:501px;top:95px;width:1px;height:17px;background:#e3e3e3"></div>
<div style="left:579px;top:95px;width:1px;height:17px;background:#e3e3e3"></div>
<div style="left:697px;top:95px;width:1px;height:17px;background:#e3e3e3"></div>
<svg style="left:208px;top:116.5px" width="12" height="4.5" viewBox="0 0 12 4.5">
<rect x="0.5" y="0.5" width="11" height="3.5" rx="0.8" fill="#f0f000" stroke="#2a2a2a" stroke-width="1"/>
<path d="M2.3 2.25H3.6M5.2 2.25H6.6M8.2 2.25H9.6" stroke="#9a9a20" stroke-width="0.8"/>
</svg>
<div class="t it" style="left:222px;top:116.80px">acre</div>
<div class="t it" style="left:506px;top:116.80px">acre</div>
<div class="t it" style="left:584px;top:116.80px">Area</div>
<div class="t it" style="left:702px;top:116.80px">Unknown</div>
<svg style="left:208px;top:129.25px" width="12" height="4.5" viewBox="0 0 12 4.5">
<rect x="0.5" y="0.5" width="11" height="3.5" rx="0.8" fill="#f0f000" stroke="#2a2a2a" stroke-width="1"/>
<path d="M2.3 2.25H3.6M5.2 2.25H6.6M8.2 2.25H9.6" stroke="#9a9a20" stroke-width="0.8"/>
</svg>
<div class="t it" style="left:222px;top:129.55px">hectare</div>
<div class="t it" style="left:506px;top:129.55px">ha</div>
<div class="t it" style="left:584px;top:129.55px">Area</div>
<div class="t it" style="left:702px;top:129.55px">Unknown</div>
<svg style="left:208px;top:142.0px" width="12" height="4.5" viewBox="0 0 12 4.5">
<rect x="0.5" y="0.5" width="11" height="3.5" rx="0.8" fill="#f0f000" stroke="#2a2a2a" stroke-width="1"/>
<path d="M2.3 2.25H3.6M5.2 2.25H6.6M8.2 2.25H9.6" stroke="#9a9a20" stroke-width="0.8"/>
</svg>
<div class="t it" style="left:222px;top:142.30px">square centimeter</div>
<div class="t it" style="left:506px;top:142.30px">cm2</div>
<div class="t it" style="left:584px;top:142.30px">Area</div>
<div class="t it" style="left:702px;top:142.30px">Unknown</div>
<svg style="left:208px;top:154.75px" width="12" height="4.5" viewBox="0 0 12 4.5">
<rect x="0.5" y="0.5" width="11" height="3.5" rx="0.8" fill="#f0f000" stroke="#2a2a2a" stroke-width="1"/>
<path d="M2.3 2.25H3.6M5.2 2.25H6.6M8.2 2.25H9.6" stroke="#9a9a20" stroke-width="0.8"/>
</svg>
<div class="t it" style="left:222px;top:155.05px">square decameter</div>
<div class="t it" style="left:506px;top:155.05px">dm2</div>
<div class="t it" style="left:584px;top:155.05px">Area</div>
<div class="t it" style="left:702px;top:155.05px">Unknown</div>
<svg style="left:208px;top:167.5px" width="12" height="4.5" viewBox="0 0 12 4.5">
<rect x="0.5" y="0.5" width="11" height="3.5" rx="0.8" fill="#f0f000" stroke="#2a2a2a" stroke-width="1"/>
<path d="M2.3 2.25H3.6M5.2 2.25H6.6M8.2 2.25H9.6" stroke="#9a9a20" stroke-width="0.8"/>
</svg>
<div class="t it" style="left:222px;top:167.80px">square foot</div>
<div class="t it" style="left:506px;top:167.80px">ft2</div>
<div class="t it" style="left:584px;top:167.80px">Area</div>
<div class="t it" style="left:702px;top:167.80px">Unknown</div>
<svg style="left:208px;top:180.25px" width="12" height="4.5" viewBox="0 0 12 4.5">
<rect x="0.5" y="0.5" width="11" height="3.5" rx="0.8" fill="#f0f000" stroke="#2a2a2a" stroke-width="1"/>
<path d="M2.3 2.25H3.6M5.2 2.25H6.6M8.2 2.25H9.6" stroke="#9a9a20" stroke-width="0.8"/>
</svg>
<div class="t it" style="left:222px;top:180.55px">square inch</div>
<div class="t it" style="left:506px;top:180.55px">in2</div>
<div class="t it" style="left:584px;top:180.55px">Area</div>
<div class="t it" style="left:702px;top:180.55px">Unknown</div>
<svg style="left:208px;top:193.0px" width="12" height="4.5" viewBox="0 0 12 4.5">
<rect x="0.5" y="0.5" width="11" height="3.5" rx="0.8" fill="#f0f000" stroke="#2a2a2a" stroke-width="1"/>
<path d="M2.3 2.25H3.6M5.2 2.25H6.6M8.2 2.25H9.6" stroke="#9a9a20" stroke-width="0.8"/>
</svg>
<div class="t it" style="left:222px;top:193.30px">square kilometer</div>
<div class="t it" style="left:506px;top:193.30px">km2</div>
<div class="t it" style="left:584px;top:193.30px">Area</div>
<div class="t it" style="left:702px;top:193.30px">Unknown</div>
<svg style="left:208px;top:205.75px" width="12" height="4.5" viewBox="0 0 12 4.5">
<rect x="0.5" y="0.5" width="11" height="3.5" rx="0.8" fill="#f0f000" stroke="#2a2a2a" stroke-width="1"/>
<path d="M2.3 2.25H3.6M5.2 2.25H6.6M8.2 2.25H9.6" stroke="#9a9a20" stroke-width="0.8"/>
</svg>
<svg style="left:214px;top:204.25px" width="6" height="5"><path d="M1 4L5 0.8" stroke="#333" stroke-width="1.2"/><circle cx="4.3" cy="1.5" r="1" fill="#666"/></svg>
<div class="t it" style="left:222px;top:206.05px">square meter</div>
<div class="t it" style="left:506px;top:206.05px">m2</div>
<div class="t it" style="left:584px;top:206.05px">Area</div>
<div class="t it" style="left:702px;top:206.05px">Unknown</div>
<svg style="left:208px;top:218.5px" width="12" height="4.5" viewBox="0 0 12 4.5">
<rect x="0.5" y="0.5" width="11" height="3.5" rx="0.8" fill="#f0f000" stroke="#2a2a2a" stroke-width="1"/>
<path d="M2.3 2.25H3.6M5.2 2.25H6.6M8.2 2.25H9.6" stroke="#9a9a20" stroke-width="0.8"/>
</svg>
<div class="t it" style="left:222px;top:218.80px">square mile</div>
<div class="t it" style="left:506px;top:218.80px">mi2</div>
<div class="t it" style="left:584px;top:218.80px">Area</div>
<div class="t it" style="left:702px;top:218.80px">Unknown</div>
<svg style="left:208px;top:231.25px" width="12" height="4.5" viewBox="0 0 12 4.5">
<rect x="0.5" y="0.5" width="11" height="3.5" rx="0.8" fill="#f0f000" stroke="#2a2a2a" stroke-width="1"/>
<path d="M2.3 2.25H3.6M5.2 2.25H6.6M8.2 2.25H9.6" stroke="#9a9a20" stroke-width="0.8"/>
</svg>
<div class="t it" style="left:222px;top:231.55px">square millimeter</div>
<div class="t it" style="left:506px;top:231.55px">mm2</div>
<div class="t it" style="left:584px;top:231.55px">Area</div>
<div class="t it" style="left:702px;top:231.55px">Unknown</div>
<svg style="left:208px;top:244.0px" width="12" height="4.5" viewBox="0 0 12 4.5">
<rect x="0.5" y="0.5" width="11" height="3.5" rx="0.8" fill="#f0f000" stroke="#2a2a2a" stroke-width="1"/>
<path d="M2.3 2.25H3.6M5.2 2.25H6.6M8.2 2.25H9.6" stroke="#9a9a20" stroke-width="0.8"/>
</svg>
<div class="t it" style="left:222px;top:244.30px">square yard</div>
<div class="t it" style="left:506px;top:244.30px">yd2</div>
<div class="t it" style="left:584px;top:244.30px">Area</div>
<div class="t it" style="left:702px;top:244.30px">Unknown</div>
<svg style="left:208px;top:256.75px" width="12" height="4.5" viewBox="0 0 12 4.5">
<rect x="0.5" y="0.5" width="11" height="3.5" rx="0.8" fill="#f0f000" stroke="#2a2a2a" stroke-width="1"/>
<path d="M2.3 2.25H3.6M5.2 2.25H6.6M8.2 2.25H9.6" stroke="#9a9a20" stroke-width="0.8"/>
</svg>
<div class="t it" style="left:222px;top:257.05px">UOM3</div>
<div class="t it" style="left:506px;top:257.05px">UOM3</div>
<div class="t it" style="left:584px;top:257.05px">Area</div>
<div class="t it" style="left:702px;top:257.05px">Unknown</div>
<svg style="left:208px;top:269.5px" width="12" height="4.5" viewBox="0 0 12 4.5">
<rect x="0.5" y="0.5" width="11" height="3.5" rx="0.8" fill="#f0f000" stroke="#2a2a2a" stroke-width="1"/>
<path d="M2.3 2.25H3.6M5.2 2.25H6.6M8.2 2.25H9.6" stroke="#9a9a20" stroke-width="0.8"/>
</svg>
<div class="t it" style="left:222px;top:269.80px">Wa</div>
<div class="t it" style="left:506px;top:269.80px">Wa</div>
<div class="t it" style="left:584px;top:269.80px">Area</div>
<div class="t it" style="left:702px;top:269.80px">Unknown</div>
<div style="left:202px;top:432px;width:539px;height:12px;background:#f0f0f0"></div>
<div style="left:215px;top:433px;width:303px;height:10px;background:#cdcdcd"></div>
<svg style="left:206px;top:435px" width="5" height="7"><path d="M4 0.5L1 3.5L4 6.5" stroke="#555" stroke-width="1.3" fill="none"/></svg>
<svg style="left:731px;top:435px" width="5" height="7"><path d="M1 0.5L4 3.5L1 6.5" stroke="#555" stroke-width="1.3" fill="none"/></svg>
<div style="left:0;top:445px;width:754px;height:18px;background:#f0f0f0"></div>
<div class="t " style="left:3.5px;top:451px;font-size:8.74px;color:#111">Unit-of-Measure Database on PIMS901-MI (75 Classes, 413 UOMs)&nbsp; Modified:3/9/2018 9:44:19 PM Owner:system</div>
<div style="left:750px;top:450px;width:2px;height:2px;background:#9a9a9a"></div>
<div style="left:746px;top:454px;width:2px;height:2px;background:#9a9a9a"></div>
<div style="left:750px;top:454px;width:2px;height:2px;background:#9a9a9a"></div>
<div style="left:742px;top:458px;width:2px;height:2px;background:#9a9a9a"></div>
<div style="left:746px;top:458px;width:2px;height:2px;background:#9a9a9a"></div>
<div style="left:750px;top:458px;width:2px;height:2px;background:#9a9a9a"></div>
<div style="left:0;top:0;width:754px;height:463px;border:1px solid #1883d7"></div>
</body></html>
